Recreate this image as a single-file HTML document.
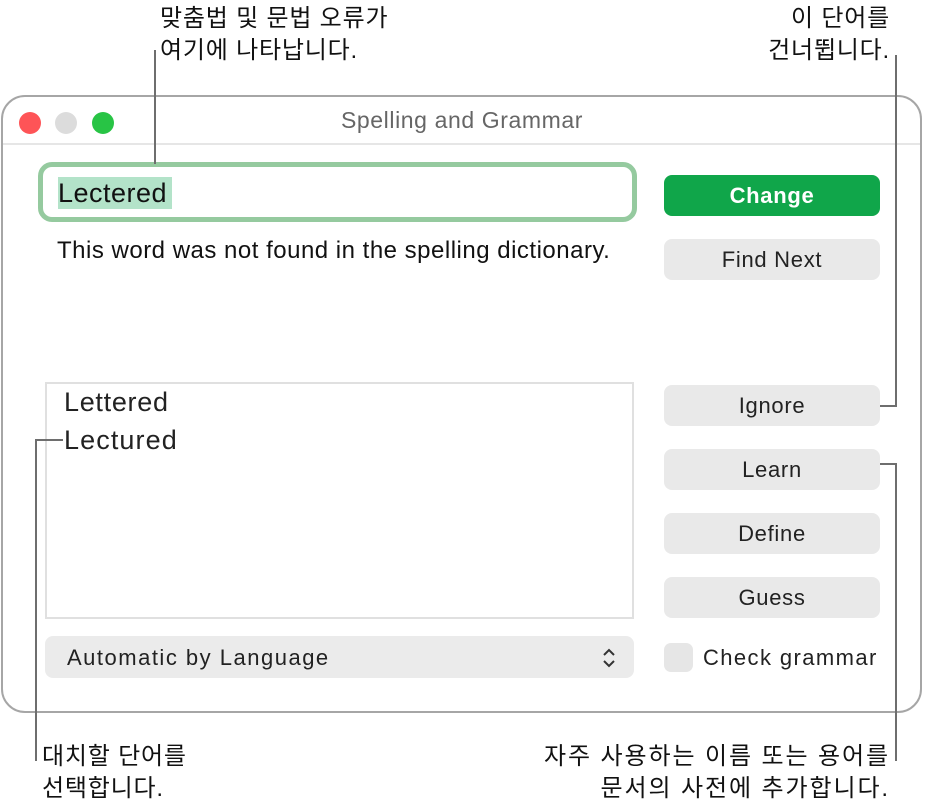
<!DOCTYPE html>
<html><head><meta charset="utf-8"><style>
*{margin:0;padding:0;box-sizing:border-box}
body{width:926px;height:812px;background:#fff;position:relative;overflow:hidden;font-family:"Liberation Sans","Noto Sans CJK KR",sans-serif;color:#1a1a1a}
.a{position:absolute;white-space:nowrap}
.cap{font-size:24px;line-height:32px;color:#111;letter-spacing:0.8px}
.btn{position:absolute;left:664px;width:216px;height:41px;border-radius:8px;background:#e9e9e9;font-size:22px;letter-spacing:0.7px;text-align:center;line-height:41px;color:#222}
.ln{position:absolute;background:#6e6e6e}
</style></head><body>
<div class="a" style="left:1px;top:95px;width:921px;height:618px;border:2px solid #a6a6a6;border-radius:24px"></div>
<div class="a" style="left:3px;top:143px;width:917px;height:2px;background:#e6e6e6"></div>
<div class="a" style="left:19px;top:112px;width:22px;height:22px;border-radius:50%;background:#fe5457"></div>
<div class="a" style="left:55px;top:112px;width:22px;height:22px;border-radius:50%;background:#dcdcdc"></div>
<div class="a" style="left:92px;top:112px;width:22px;height:22px;border-radius:50%;background:#28c445"></div>
<div class="a" style="left:0;width:924px;top:107px;text-align:center;font-size:23px;letter-spacing:0.6px;color:#666">Spelling and Grammar</div>
<div class="a" style="left:38px;top:162px;width:599px;height:60px;border:5px solid #95ca9f;border-radius:14px;background:#fff"></div>
<div class="a" style="left:58px;top:177px;height:32px;width:114px;background:#b3e3c9"></div>
<div class="a" style="left:58px;top:177px;font-size:27px;letter-spacing:0.5px;line-height:32px;color:#111">Lectered</div>
<div class="a" style="left:57px;top:237px;font-size:24px;letter-spacing:0.5px;color:#111">This word was not found in the spelling dictionary.</div>
<div class="btn" style="top:175px;background:#10a64a;color:#fff;font-weight:bold">Change</div>
<div class="btn" style="top:239px">Find Next</div>
<div class="btn" style="top:385px">Ignore</div>
<div class="btn" style="top:449px">Learn</div>
<div class="btn" style="top:513px">Define</div>
<div class="btn" style="top:577px">Guess</div>
<div class="a" style="left:45px;top:382px;width:589px;height:237px;border:2px solid #e0e0e0"></div>
<div class="a" style="left:64px;top:386px;font-size:27px;letter-spacing:0.7px;line-height:32px;color:#222">Lettered</div>
<div class="a" style="left:64px;top:424px;font-size:27px;letter-spacing:1.1px;line-height:32px;color:#222">Lectured</div>
<div class="a" style="left:45px;top:636px;width:589px;height:42px;border-radius:8px;background:#ebebeb"></div>
<div class="a" style="left:67px;top:645px;font-size:22px;letter-spacing:1.5px;color:#222">Automatic by Language</div>
<svg class="a" style="left:600px;top:647px" width="18" height="22"><path d="M4 8l5-5 5 5M4 14l5 5 5-5" fill="none" stroke="#333" stroke-width="2"/></svg>
<div class="a" style="left:664px;top:643px;width:29px;height:29px;border-radius:7px;background:#e6e6e6"></div>
<div class="a" style="left:703px;top:645px;font-size:22px;letter-spacing:1.4px;color:#222">Check grammar</div>
<div class="ln" style="left:154px;top:50px;width:2px;height:114px"></div>
<div class="ln" style="left:895px;top:55px;width:2px;height:352px"></div>
<div class="ln" style="left:880px;top:405px;width:17px;height:2px"></div>
<div class="ln" style="left:880px;top:463px;width:17px;height:2px"></div>
<div class="ln" style="left:895px;top:463px;width:2px;height:298px"></div>
<div class="ln" style="left:35px;top:439px;width:2px;height:322px"></div>
<div class="ln" style="left:35px;top:439px;width:28px;height:2px"></div>
<div class="a cap" style="left:160px;top:3px">맞춤법 및 문법 오류가<br>여기에 나타납니다.</div>
<div class="a cap" style="right:36px;top:3px;text-align:right">이 단어를<br>건너뜁니다.</div>
<div class="a cap" style="left:42px;top:741px">대치할 단어를<br>선택합니다.</div>
<div class="a cap" style="right:36px;top:741px;text-align:right;letter-spacing:1.9px">자주 사용하는 이름 또는 용어를<br>문서의 사전에 추가합니다.</div>
</body></html>
